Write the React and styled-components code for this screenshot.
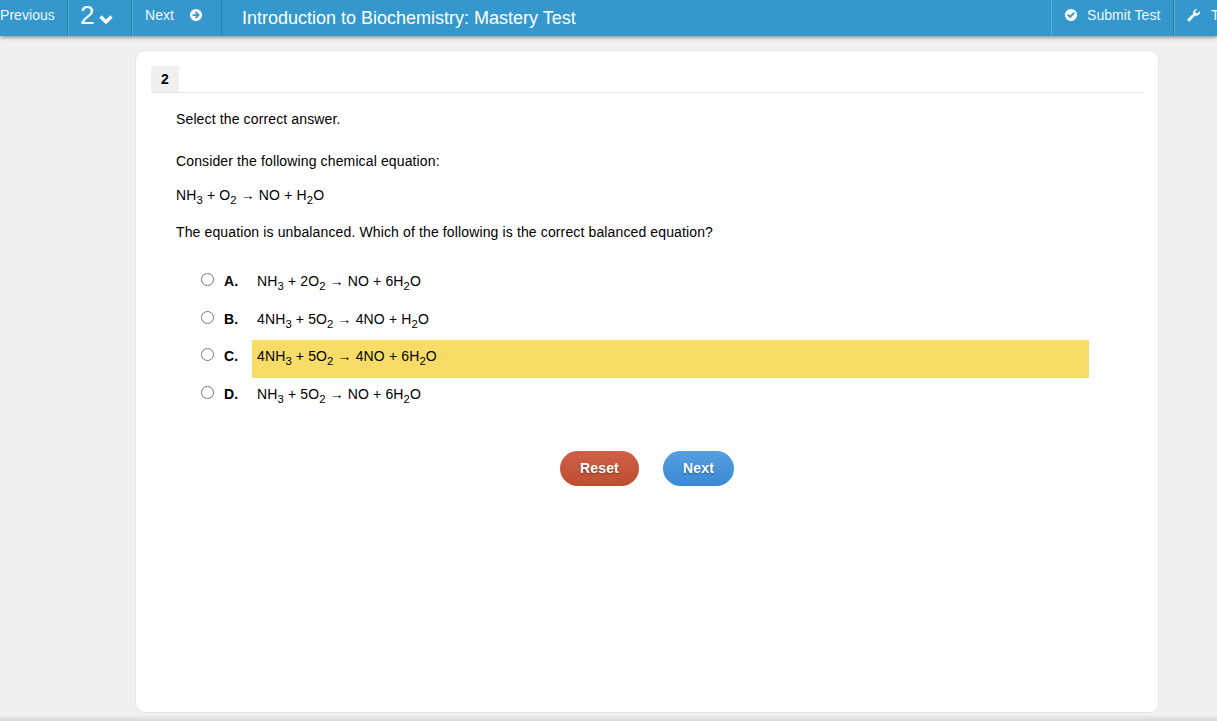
import React from "react";
import styled, { createGlobalStyle } from "styled-components";

const Global = createGlobalStyle`
  html, body { margin: 0; padding: 0; height: 100%; overflow: hidden; background: #f0f0f0; }
  body { font-family: "Liberation Sans", Arial, sans-serif; color: #000; }
  #root { height: 100%; }
`;
const Page = styled.div`
  height: 721px; display: flex; flex-direction: column; overflow: hidden;
  background: #f0f0f0; position: relative;
`;
const Nav = styled.header`
  flex: none; height: 36px; display: flex; background: #3498cd; color: #fff;
  box-shadow: 0 1px 4px rgba(0,0,0,.5); overflow: hidden; position: relative;
`;
const NavLeft = styled.div`flex: 0 0 1051px; display: flex;`;
const NavRight = styled.div`flex: none; display: flex;`;
const NavItem = styled.div`
  flex: none; width: ${p => p.$w}px; box-sizing: border-box; padding-left: ${p => p.$pl || 0}px;
  display: flex; align-items: center; gap: ${p => p.$gap || 0}px;
  font-size: 14px; letter-spacing: .05px; color: #f0f7fb;
  border-left: ${p => p.$light ? "1px solid #5aabd6" : "0"};
  border-right: ${p => p.$dark ? "1px solid #2a7fae" : "0"};
  padding-bottom: 6px; height: 36px;
`;
const Count = styled.span`font-size: 26px; line-height: 30px; font-weight: 400; color: #fff;`;
const Chevron = styled.svg`margin-top: 8px;`;
const Title = styled.div`
  padding: 0 0 0 20px; font-size: 18px; line-height: 36px; color: #fff; white-space: nowrap;
`;
const Main = styled.main`flex: 1; display: flex; padding: 14px 58px 7px 135px; min-height: 0;`;
const Card = styled.section`
  box-sizing: border-box; width: 1024px; height: 663px; background: #fff;
  border: 1px solid #e6e6e6; border-radius: 10px; padding: 15px 15px 0;
`;
const TabBar = styled.div`height: 26px; border-bottom: 1px solid #e4e4e4;`;
const Tab = styled.div`
  width: 28px; height: 26px; background: #f0f0f0; font-size: 14px; font-weight: 700;
  display: flex; align-items: center; justify-content: center;
`;
const Body = styled.div`padding: 0 0 0 25px; font-size: 14px; letter-spacing: .13px;`;
const Para = styled.p`margin: 0; line-height: 18px; padding-top: ${p => p.$top}px; white-space: nowrap;`;
const Sub = styled.sub`font-size: 11.3px; line-height: 0; vertical-align: -4px;`;
const List = styled.div`padding: 24px 54px 0 25px; display: flex; flex-direction: column;`;
const Row = styled.div`display: flex; height: 37.67px;`;
const Radio = styled.span`
  flex: none; box-sizing: border-box; width: 13px; height: 13px; margin: 8px 10px 0 0;
  border: 1px solid #767676; border-radius: 50%; background: #fff;
`;
const Letter = styled.b`flex: none; width: 28px; padding-top: 7px; line-height: 18px;`;
const Answer = styled.div`
  flex: 1; padding: 7px 5px 0; line-height: 18px; box-sizing: border-box;
  background: ${p => p.$on ? "#f7dd68" : "transparent"};
`;
const Actions = styled.div`display: flex; justify-content: center; gap: 24px; padding: 35px 0 0 0; margin-left: -25px;`;
const Pill = styled.button`
  border: 0; height: 35px; width: ${p => p.$w}px; border-radius: 18px; color: #fff;
  font: 700 14px "Liberation Sans", Arial, sans-serif; letter-spacing: .14px;
  text-shadow: 0 1px 2px rgba(0,0,0,.4); padding: 0;
  background: linear-gradient(${p => p.$from}, ${p => p.$to});
`;
const Foot = styled.div`
  position: absolute; left: 0; right: 0; bottom: 0; height: 6px;
  background: linear-gradient(#f0f0f0, #d6d6d6);
`;

const Icon = ({ size = 14, children }) => (
  <svg width={size} height={size} viewBox="0 0 16 16" fill="#fff" aria-hidden="true">{children}</svg>
);
const Eq = ({ parts }) => parts.map((p, i) => (typeof p === "number" ? <Sub key={i}>{p}</Sub> : <React.Fragment key={i}>{p}</React.Fragment>));

const options = [
  ["A.", ["NH", 3, " + 2O", 2, " → NO + 6H", 2, "O"]],
  ["B.", ["4NH", 3, " + 5O", 2, " → 4NO + H", 2, "O"]],
  ["C.", ["4NH", 3, " + 5O", 2, " → 4NO + 6H", 2, "O"], true],
  ["D.", ["NH", 3, " + 5O", 2, " → NO + 6H", 2, "O"]],
];

export default function App() {
  return (
    <Page>
      <Global />
      <Nav>
        <NavLeft>
          <NavItem $w={68} $dark>Previous</NavItem>
          <NavItem $w={64} $pl={11} $gap={4} $light $dark>
            <Count>2</Count>
            <Chevron width="14" height="11" viewBox="0 0 14 11"><path d="M1.500 2.500l5.500 5.500 5.500-5.500" fill="none" stroke="#fff" strokeWidth="3.200" /></Chevron>
          </NavItem>
          <NavItem $w={90} $pl={12} $gap={15} $light $dark>
            Next
            <Icon size={14}><path fillRule="evenodd" d="M8 1a7 7 0 1 0 0 14A7 7 0 0 0 8 1zM8.200 3.800l4.200 4.200-4.200 4.200-1.400-1.400L8.600 9H4V7h4.600L6.800 5.200z" /></Icon>
          </NavItem>
          <Title>Introduction to Biochemistry: Mastery Test</Title>
        </NavLeft>
        <NavRight>
          <NavItem $w={123} $pl={12} $gap={9} $light $dark>
            <Icon size={14}><path fillRule="evenodd" d="M8 1a7 7 0 1 0 0 14A7 7 0 0 0 8 1zM7 11.600L3.600 8.200l1.500-1.500L7 8.600l3.900-3.900 1.500 1.500z" /></Icon>
            Submit Test
          </NavItem>
          <NavItem $w={80} $pl={11} $gap={10} $light>
            <Icon size={15}><path d="M15 4.200a4 4 0 0 1-5.300 3.900L4 14a1.600 1.600 0 0 1-2.200-2.200L7.700 6.100A4 4 0 0 1 12 1L9.700 3.400l.4 2 2 .5 2.400-2.400c.3.200.5.400.5.700z" /></Icon>
            Tools
          </NavItem>
        </NavRight>
      </Nav>
      <Main>
        <Card>
          <TabBar><Tab>2</Tab></TabBar>
          <Body>
            <Para $top={17}>Select the correct answer.</Para>
            <Para $top={24}>Consider the following chemical equation:</Para>
            <Para $top={16}><Eq parts={["NH", 3, " + O", 2, " → NO + H", 2, "O"]} /></Para>
            <Para $top={19}>The equation is unbalanced. Which of the following is the correct balanced equation?</Para>
            <List>
              {options.map(([l, parts, on]) => (
                <Row key={l}>
                  <Radio />
                  <Letter>{l}</Letter>
                  <Answer $on={on}><Eq parts={parts} /></Answer>
                </Row>
              ))}
            </List>
            <Actions>
              <Pill $w={79} $from="#cf6049" $to="#bd4e2f">Reset</Pill>
              <Pill $w={71} $from="#56a0de" $to="#3a88d6">Next</Pill>
            </Actions>
          </Body>
        </Card>
      </Main>
      <Foot />
    </Page>
  );
}
